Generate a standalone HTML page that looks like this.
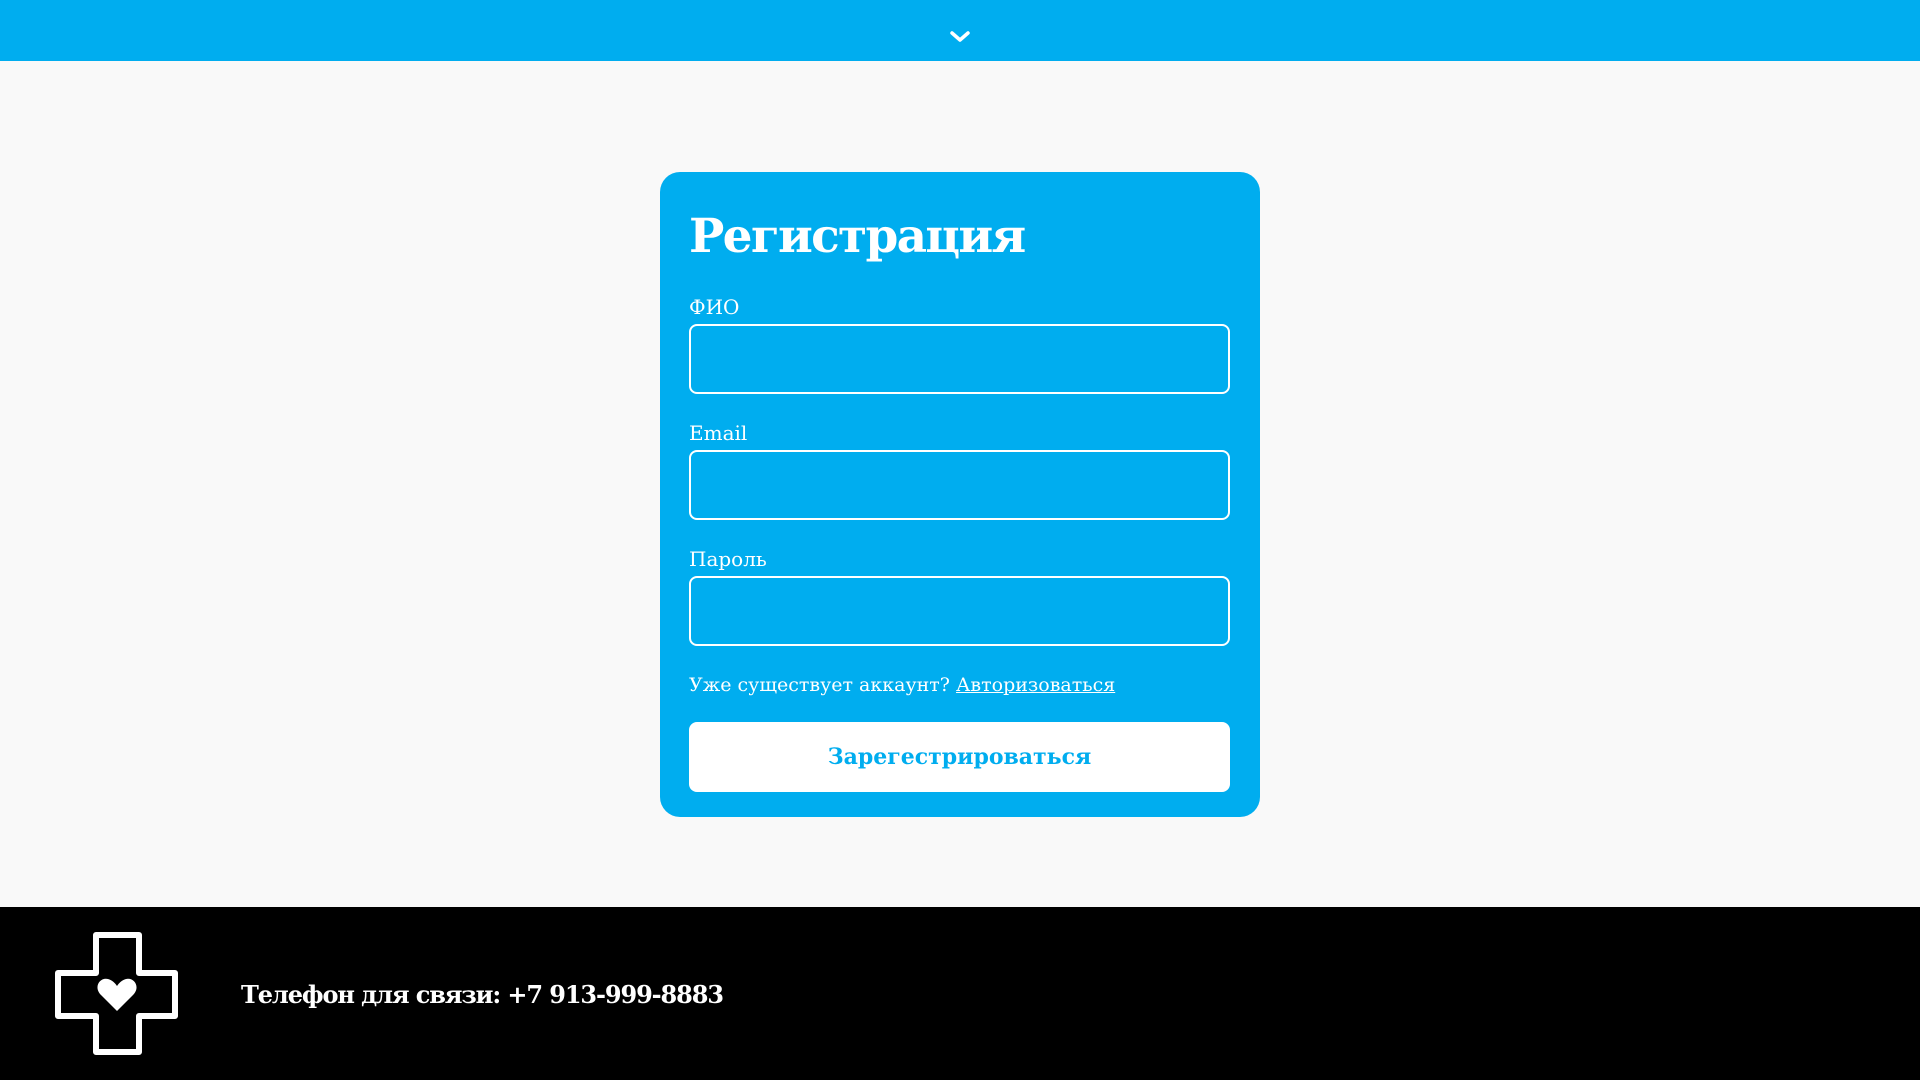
<!DOCTYPE html>
<html><head><meta charset="utf-8"><style>
*{margin:0;padding:0;box-sizing:border-box}
body{width:1920px;height:1080px;background:#f9f9f9;font-family:"DejaVu Serif","Liberation Serif",serif;position:relative;overflow:hidden}
.top{position:absolute;left:0;top:0;width:1920px;height:61px;background:#00adef}
.card{position:absolute;left:660px;top:172px;width:600px;height:645px;background:#00adef;border-radius:20px}
h1{position:absolute;left:29px;top:37px;color:#fff;font-size:47px;font-weight:bold;letter-spacing:-1.7px}
.lab{position:absolute;left:29px;color:#fff;font-size:20px}
.inp{position:absolute;left:29px;width:541px;height:70px;border:2px solid #fff;border-radius:8px}
.btn{position:absolute;left:29px;top:550px;width:541px;height:70px;background:#fff;border-radius:8px;color:#00adef;font-weight:bold;font-size:22px;text-align:center;line-height:70px}
.foot{position:absolute;left:0;top:907px;width:1920px;height:173px;background:#000}
.phone{position:absolute;left:241px;top:73px;color:#fff;font-size:24px;font-weight:bold;letter-spacing:-1.1px}
</style></head><body>
<div class="top"><svg style="position:absolute;left:949px;top:30px" width="22" height="14" viewBox="0 0 22 14"><path d="M3 3 L11 10 L19 3" fill="none" stroke="#fff" stroke-width="3.5" stroke-linecap="round" stroke-linejoin="round"/></svg></div>
<div class="card">
<h1>Регистрация</h1>
<div class="lab" style="top:123px">ФИО</div>
<div class="inp" style="top:152px"></div>
<div class="lab" style="top:249px">Email</div>
<div class="inp" style="top:278px"></div>
<div class="lab" style="top:375px">Пароль</div>
<div class="inp" style="top:404px"></div>
<div class="lab" style="top:502px;font-size:19px">Уже существует аккаунт? <u>Авторизоваться</u></div>
<div class="btn">Зарегестрироваться</div>
</div>
<div class="foot">
<svg style="position:absolute;left:55px;top:25px" width="123" height="123" viewBox="0 0 123 123">
<path d="M41 3 H84 V41 H120 V84 H84 V120 H41 V84 H3 V41 H41 Z" fill="none" stroke="#fff" stroke-width="6" stroke-linejoin="round"/>
<path d="M62 79 L46 63 C38 55 45 45 53 47 C57 48 60 51 62 54 C64 51 67 48 71 47 C79 45 86 55 78 63 Z" fill="#fff"/>
</svg>
<div class="phone">Телефон для связи: +7 913-999-8883</div>
</div>
</body></html>
